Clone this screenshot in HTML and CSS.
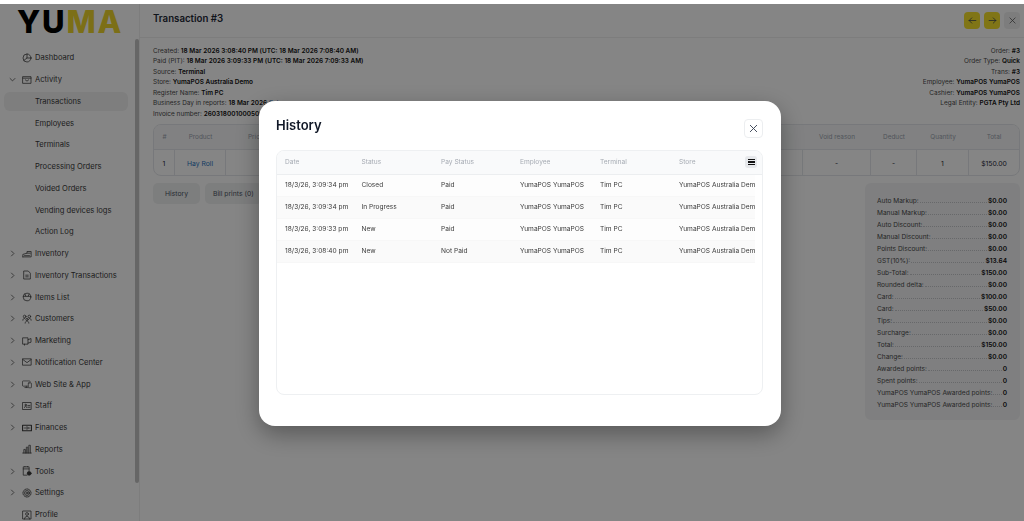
FILE: index.html

```html
<!DOCTYPE html>
<html lang="en">
<head>
  <meta charset="UTF-8" />
  <title>Transaction #3</title>
  <link rel="stylesheet" href="styles.css">
</head>
<body>
  <svg class="defs" width="0" height="0">
    <symbol id="chev-r" viewBox="0 0 10 10"><path d="M3.5 1.5 7 5 3.5 8.5"/></symbol>
    <symbol id="chev-d" viewBox="0 0 10 10"><path d="M1.5 3.5 5 7 8.5 3.5"/></symbol>
    <symbol id="i-dash" viewBox="0 0 12 12"><circle cx="6" cy="6" r="4.8"/><path d="M6 1.2V6L2.4 8.8M6 6h4.8"/></symbol>
    <symbol id="i-activity" viewBox="0 0 12 12"><rect x="1.2" y="2" width="9.6" height="8"/><path d="M1.2 3.8h9.6M4 5.8 6 7.4 8 5.8"/></symbol>
    <symbol id="i-inventory" viewBox="0 0 12 12"><path d="M1 9.5V6.5l5-1.5M6 5V3h5v6.5H1M3 8h6M7 5h3"/></symbol>
    <symbol id="i-doc" viewBox="0 0 12 12"><path d="M2.5 1.2h5L10 3.8v7H2.500zM4.500 6.200h3M4.500 8.200h3"/></symbol>
    <symbol id="i-items" viewBox="0 0 12 12"><circle cx="6" cy="6" r="4.600"/><path d="M1.500 5.200h9M3.500 2.500 4.500 5M8.500 2.500 7.500 5"/></symbol>
    <symbol id="i-customers" viewBox="0 0 12 12"><circle cx="3.200" cy="3" r="1.600"/><circle cx="8.800" cy="3" r="1.600"/><circle cx="6" cy="6.500" r="1.400"/><path d="M1 7.500c0-1.500 1-2.200 2-2.200M11 7.500c0-1.500-1-2.200-2-2.200M3.800 11c0-1.500 1-2.500 2.200-2.500s2.200 1 2.200 2.500"/></symbol>
    <symbol id="i-marketing" viewBox="0 0 12 12"><path d="M1.200 2.200h6v7.600h-6zM7.200 4.500l3.600-1.500v4.500l-3.600 1M3 9.800v1.200"/></symbol>
    <symbol id="i-mail" viewBox="0 0 12 12"><rect x="1" y="2.200" width="10" height="7.600"/><path d="M1 3l5 3.800L11 3"/></symbol>
    <symbol id="i-web" viewBox="0 0 14 12"><path d="M8 9H1.500a.8.800 0 0 1-.8-.8V2.500a.8.800 0 0 1 .8-.8h9a.8.800 0 0 1 .8.800v1M4 11h4M6 9v2"/><rect x="8.800" y="4.500" width="4.400" height="6.800" rx=".8"/></symbol>
    <symbol id="i-staff" viewBox="0 0 12 12"><rect x="1" y="1.800" width="10" height="8.400"/><path d="M3 7.800c0-1 .6-1.500 1.300-1.500S5.600 6.800 5.600 7.800M7 5.500h2.500M7 7.500h2.500"/><circle cx="4.300" cy="4.800" r=".9"/></symbol>
    <symbol id="i-finance" viewBox="0 0 14 12"><rect x=".8" y="2.200" width="12.400" height="7.600" stroke-width="1.500"/><circle cx="7" cy="6" r="1.700"/><path d="M3 6h.8M10.200 6h.8"/></symbol>
    <symbol id="i-reports" viewBox="0 0 12 12"><path d="M.8 10.800h10.400M2.200 10.800V6.500h1.800v4.300M5.200 10.800V3.800H7v7M8.200 10.800V1.500H10v9.300"/></symbol>
    <symbol id="i-tools" viewBox="0 0 12 12"><path d="M6 11H1.500V1h7v4.500M1.500 3.500h7M3.500 1v-.500M6.500 1v-.500"/><circle cx="8.600" cy="8.800" r="2.300" fill="currentColor"/></symbol>
    <symbol id="i-settings" viewBox="0 0 12 12"><circle cx="6" cy="6" r="4.800" stroke-dasharray="2 .6"/><circle cx="6" cy="6" r="3"/><circle cx="6" cy="6" r="1.200"/></symbol>
    <symbol id="i-profile" viewBox="0 0 12 12"><rect x="1.200" y="1.200" width="9.600" height="9.600"/><circle cx="6" cy="4.800" r="1.700"/><path d="M3 10.800c0-2 1.300-3 3-3s3 1 3 3"/></symbol>
    <symbol id="i-x" viewBox="0 0 12 12"><path d="M2.500 2.500l7 7M9.500 2.500l-7 7"/></symbol>
    <symbol id="i-left" viewBox="0 0 12 12"><path d="M10.500 6h-9M5 2.500 1.500 6 5 9.500"/></symbol>
    <symbol id="i-right" viewBox="0 0 12 12"><path d="M1.500 6h9M7 2.500 10.500 6 7 9.500"/></symbol>
  </svg>

  <div class="top-strip"></div>

  <div class="app">
    <aside class="sidebar">
      <div class="logo">YU<span>MA</span></div>
      <nav class="nav">
        <a class="nav-item"><i class="chev"></i><svg class="ico"><use href="#i-dash"/></svg>Dashboard</a>
        <a class="nav-item"><svg class="chev"><use href="#chev-d"/></svg><svg class="ico"><use href="#i-activity"/></svg>Activity</a>
        <a class="nav-item sub active">Transactions</a>
        <a class="nav-item sub">Employees</a>
        <a class="nav-item sub">Terminals</a>
        <a class="nav-item sub">Processing Orders</a>
        <a class="nav-item sub">Voided Orders</a>
        <a class="nav-item sub">Vending devices logs</a>
        <a class="nav-item sub">Action Log</a>
        <a class="nav-item"><svg class="chev"><use href="#chev-r"/></svg><svg class="ico"><use href="#i-inventory"/></svg>Inventory</a>
        <a class="nav-item"><svg class="chev"><use href="#chev-r"/></svg><svg class="ico"><use href="#i-doc"/></svg>Inventory Transactions</a>
        <a class="nav-item"><svg class="chev"><use href="#chev-r"/></svg><svg class="ico"><use href="#i-items"/></svg>Items List</a>
        <a class="nav-item"><svg class="chev"><use href="#chev-r"/></svg><svg class="ico"><use href="#i-customers"/></svg>Customers</a>
        <a class="nav-item"><svg class="chev"><use href="#chev-r"/></svg><svg class="ico"><use href="#i-marketing"/></svg>Marketing</a>
        <a class="nav-item"><svg class="chev"><use href="#chev-r"/></svg><svg class="ico"><use href="#i-mail"/></svg>Notification Center</a>
        <a class="nav-item"><svg class="chev"><use href="#chev-r"/></svg><svg class="ico"><use href="#i-web"/></svg>Web Site &amp; App</a>
        <a class="nav-item"><svg class="chev"><use href="#chev-r"/></svg><svg class="ico"><use href="#i-staff"/></svg>Staff</a>
        <a class="nav-item"><svg class="chev"><use href="#chev-r"/></svg><svg class="ico"><use href="#i-finance"/></svg>Finances</a>
        <a class="nav-item"><i class="chev"></i><svg class="ico"><use href="#i-reports"/></svg>Reports</a>
        <a class="nav-item"><svg class="chev"><use href="#chev-r"/></svg><svg class="ico"><use href="#i-tools"/></svg>Tools</a>
        <a class="nav-item"><svg class="chev"><use href="#chev-r"/></svg><svg class="ico"><use href="#i-settings"/></svg>Settings</a>
        <a class="nav-item"><i class="chev"></i><svg class="ico"><use href="#i-profile"/></svg>Profile</a>
      </nav>
      <div class="scroll-thumb"></div>
    </aside>

    <main class="main">
      <header class="main-head">
        <h1>Transaction #3</h1>
        <div class="head-btns">
          <button class="sq yellow"><svg><use href="#i-left"/></svg></button>
          <button class="sq yellow"><svg><use href="#i-right"/></svg></button>
          <button class="sq grey"><svg><use href="#i-x"/></svg></button>
        </div>
      </header>

      <section class="content">
        <div class="info">
          <div>
            <p>Created: <b>18 Mar 2026 3:08:40 PM (UTC: 18 Mar 2026 7:08:40 AM)</b></p>
            <p>Paid (PIT): <b>18 Mar 2026 3:09:33 PM (UTC: 18 Mar 2026 7:09:33 AM)</b></p>
            <p>Source: <b>Terminal</b></p>
            <p>Store: <b>YumaPOS Australia Demo</b></p>
            <p>Register Name: <b>Tim PC</b></p>
            <p>Business Day in reports: <b>18 Mar 2026</b> <a>Sale</a></p>
            <p>Invoice number: <b>260318001000500</b></p>
          </div>
          <div class="info-right">
            <p>Order: <b>#3</b></p>
            <p>Order Type: <b>Quick</b></p>
            <p>Trans: <b>#3</b></p>
            <p>Employee: <b>YumaPOS YumaPOS</b></p>
            <p>Cashier: <b>YumaPOS YumaPOS</b></p>
            <p>Legal Entity: <b>PGTA Pty Ltd</b></p>
          </div>
        </div>

        <div class="order-table">
          <div class="order-row order-head">
            <span class="c-num">#</span><span class="c-product">Product</span><span class="c-price">Price</span>
            <span class="c-void">Void reason</span><span class="c-deduct">Deduct</span><span class="c-qty">Quantity</span><span class="c-total">Total</span>
          </div>
          <div class="order-row order-body">
            <span class="c-num">1</span><span class="c-product"><a>Hay Roll</a></span><span class="c-price"></span>
            <span class="c-void">-</span><span class="c-deduct">-</span><span class="c-qty">1</span><span class="c-total">$150.00</span>
          </div>
        </div>

        <div class="lower">
          <div class="tabs">
            <button class="tab">History</button>
            <button class="tab">Bill prints (0)</button>
          </div>
          <div class="summary">
            <div class="sum-row"><span>Auto Markup:</span><i></i><b>$0.00</b></div>
            <div class="sum-row"><span>Manual Markup:</span><i></i><b>$0.00</b></div>
            <div class="sum-row"><span>Auto Discount:</span><i></i><b>$0.00</b></div>
            <div class="sum-row"><span>Manual Discount:</span><i></i><b>$0.00</b></div>
            <div class="sum-row"><span>Points Discount:</span><i></i><b>$0.00</b></div>
            <div class="sum-row"><span>GST(10%):</span><i></i><b>$13.64</b></div>
            <div class="sum-row"><span>Sub-Total:</span><i></i><b>$150.00</b></div>
            <div class="sum-row"><span>Rounded delta:</span><i></i><b>$0.00</b></div>
            <div class="sum-row"><span>Card:</span><i></i><b>$100.00</b></div>
            <div class="sum-row"><span>Card:</span><i></i><b>$50.00</b></div>
            <div class="sum-row"><span>Tips:</span><i></i><b>$0.00</b></div>
            <div class="sum-row"><span>Surcharge:</span><i></i><b>$0.00</b></div>
            <div class="sum-row"><span>Total:</span><i></i><b>$150.00</b></div>
            <div class="sum-row"><span>Change:</span><i></i><b>$0.00</b></div>
            <div class="sum-row"><span>Awarded points:</span><i></i><b>0</b></div>
            <div class="sum-row"><span>Spent points:</span><i></i><b>0</b></div>
            <div class="sum-row"><span>YumaPOS YumaPOS Awarded points:</span><i></i><b>0</b></div>
            <div class="sum-row"><span>YumaPOS YumaPOS Awarded points:</span><i></i><b>0</b></div>
          </div>
        </div>
      </section>
    </main>
  </div>

  <div class="overlay"></div>

  <div class="modal">
    <div class="modal-head">
      <h2>History</h2>
      <button class="modal-close"><svg><use href="#i-x"/></svg></button>
    </div>
    <div class="hist">
      <div class="hist-head">
        <div class="hist-row">
          <span>Date</span><span>Status</span><span>Pay Status</span><span>Employee</span><span>Terminal</span><span>Store</span>
        </div>
        <button class="menu-btn"><i></i><i></i><i></i></button>
      </div>
      <div class="hist-body">
        <div class="hist-row">
          <span>18/3/26, 3:09:34 pm</span><span>Closed</span><span>Paid</span><span>YumaPOS YumaPOS</span><span>Tim PC</span><span>YumaPOS Australia Demo</span>
        </div>
        <div class="hist-row">
          <span>18/3/26, 3:09:34 pm</span><span>In Progress</span><span>Paid</span><span>YumaPOS YumaPOS</span><span>Tim PC</span><span>YumaPOS Australia Demo</span>
        </div>
        <div class="hist-row">
          <span>18/3/26, 3:09:33 pm</span><span>New</span><span>Paid</span><span>YumaPOS YumaPOS</span><span>Tim PC</span><span>YumaPOS Australia Demo</span>
        </div>
        <div class="hist-row">
          <span>18/3/26, 3:08:40 pm</span><span>New</span><span>Not Paid</span><span>YumaPOS YumaPOS</span><span>Tim PC</span><span>YumaPOS Australia Demo</span>
        </div>
      </div>
    </div>
  </div>
</body>
</html>
```

FILE: styles.css

```css
* { box-sizing: border-box; }
html, body { margin: 0; height: 100%; overflow: hidden; }
body { font-family: Inter, "Liberation Sans", sans-serif; font-size: 7px; color: #222; background: #fff; }
p, h1, h2 { margin: 0; }
button { font-family: inherit; border: 0; padding: 0; }
svg { fill: none; stroke: currentColor; stroke-width: 1; stroke-linecap: round; stroke-linejoin: round; }
.defs { position: absolute; }

.top-strip { height: 4px; background: #fff; position: relative; z-index: 5; }
.app { display: flex; height: 517px; }

/* sidebar */
.sidebar { width: 140px; flex: none; position: relative; border-right: 1px solid #f0f0f0; overflow: hidden; }
.logo { height: 36px; padding-left: 17px; font-size: 31px; line-height: 35px; font-weight: 800; letter-spacing: 1.8px; color: #000; }
.logo span { color: #eed52c; }
.nav { padding-top: 7px; }
.nav-item { display: flex; align-items: center; height: 21.75px; padding-left: 9px; font-size: 7.6px; color: #3a3a3a; position: relative; }
.nav-item.sub { padding-left: 35px; }
.nav-item.active::before { content: ""; position: absolute; left: 4px; right: 11px; top: 1px; bottom: 1px; background: #f1f1f1; border-radius: 6px; z-index: -1; }
.chev { display: block; width: 7px; height: 7px; flex: none; margin-right: 6px; }
.ico { width: 10px; height: 10px; flex: none; margin-right: 3px; stroke-width: .9; }
.scroll-thumb { position: absolute; left: 135px; top: 35px; width: 4px; height: 444px; background: #c4c4c4; border-radius: 2px; }

/* main */
.main { flex: 1; padding: 0 4px 0 13px; min-width: 0; }
.main-head { display: flex; align-items: center; justify-content: space-between; height: 34px; border-bottom: 1px solid #f0f0f0; margin: 0 -4px 0 -13px; padding: 0 4px 0 13px; }
.main-head h1 { font-size: 9.7px; font-weight: 600; color: #1f2937; margin-top: -4px; }
.head-btns { display: flex; gap: 4px; }
.sq { width: 16px; height: 17px; border-radius: 4px; display: flex; align-items: center; justify-content: center; color: #374151; }
.sq svg { width: 9px; height: 9px; }
.yellow { background: #f5e02b; }
.grey { background: #f0f0f0; color: #555; }

.content { padding-top: 8px; }
.info { display: flex; justify-content: space-between; font-size: 6.45px; line-height: 10.45px; color: #4a4a4a; height: 78px; }
.info b { color: #111; font-weight: 600; }
.info a { color: #2f6fb0; }
.info-right { text-align: right; }

.order-table { border: 1px solid #e5e7eb; border-radius: 8px; height: 52px; overflow: hidden; font-size: 6.8px; }
.order-row { display: flex; align-items: stretch; text-align: center; }
.order-row span { display: flex; align-items: center; justify-content: center; flex: none; }
.order-head { height: 25px; background: #f7f8f9; border-bottom: 1px solid #e5e7eb; color: #9ca3af; font-size: 6.4px; }
.order-body { height: 26px; color: #1f2937; }
.order-body span { border-right: 1px solid #e5e7eb; }
.order-body span:last-child { border-right: 0; }
.order-row a { color: #2a75c0; }
.c-num { width: 21px; }
.c-product { width: 51px; }
.c-price { width: 577px; justify-content: flex-start !important; padding-left: 22px; }
.c-void { width: 68px; }
.c-deduct { width: 46px; }
.c-qty { width: 52px; }
.c-total { flex: 1 !important; }

.lower { display: flex; justify-content: space-between; align-items: flex-start; padding-top: 7px; }
.tabs { display: flex; gap: 5px; }
.tab { height: 21px; min-width: 47px; padding: 0 8px; border-radius: 5px; background: #f0f1f2; color: #4b5563; font-size: 6.8px; }
.summary { width: 155px; height: 237px; padding: 11.5px 13px 0 12px; background: #f3f4f6; border-radius: 6px; font-size: 6.55px; }
.sum-row { display: flex; align-items: baseline; height: 12.03px; line-height: 12px; color: #4a4a4a; }
.sum-row i { flex: 1; border-bottom: 1px dotted #c5c8cc; margin: 0 1px; }
.sum-row b { color: #111; font-weight: 600; }

/* dialog */
.overlay { position: fixed; inset: 4px 0 0 0; background: rgba(0, 0, 0, .48); z-index: 2; }
.modal { position: fixed; left: 259px; top: 101px; width: 522px; height: 325px; background: #fff; border-radius: 16px; padding: 18px 18px 0 17px; z-index: 3; box-shadow: 0 8px 24px rgba(0, 0, 0, .35); }
.modal-head { display: flex; align-items: flex-start; justify-content: space-between; height: 31px; }
.modal-head h2 { font-size: 13px; line-height: 13px; font-weight: 600; color: #111827; }
.modal-close { width: 19px; height: 19px; background: #fff; border: 1px solid #eceef0; border-radius: 4px; display: flex; align-items: center; justify-content: center; color: #374151; }
.modal-close svg { width: 11px; height: 11px; }

.hist { height: 245px; border: 1px solid #eef0f2; border-radius: 8px; overflow: hidden; font-size: 6.6px; }
.hist-head { position: relative; height: 23.5px; background: #f9fafb; border-bottom: 1px solid #eceef0; color: #a6abb3; }
.hist-row { display: grid; grid-template-columns: 76.5px 79.5px 79px 80px 79px 76px; height: 22px; align-items: center; padding-left: 8px; width: 478px; overflow: hidden; white-space: nowrap; }
.hist-body { color: #3a3a3a; }
.hist-body .hist-row { background: #fdfdfd; border-bottom: 1px solid #f7f7f7; }
.hist-body .hist-row:nth-child(even) { background: #fafafa; }
.menu-btn { position: absolute; right: 5px; top: 5px; width: 12px; height: 12px; border-radius: 3px; background: #e6e8eb; display: flex; flex-direction: column; justify-content: center; align-items: center; gap: 1px; }
.menu-btn i { display: block; width: 7px; height: 1.2px; background: #111; }
```
